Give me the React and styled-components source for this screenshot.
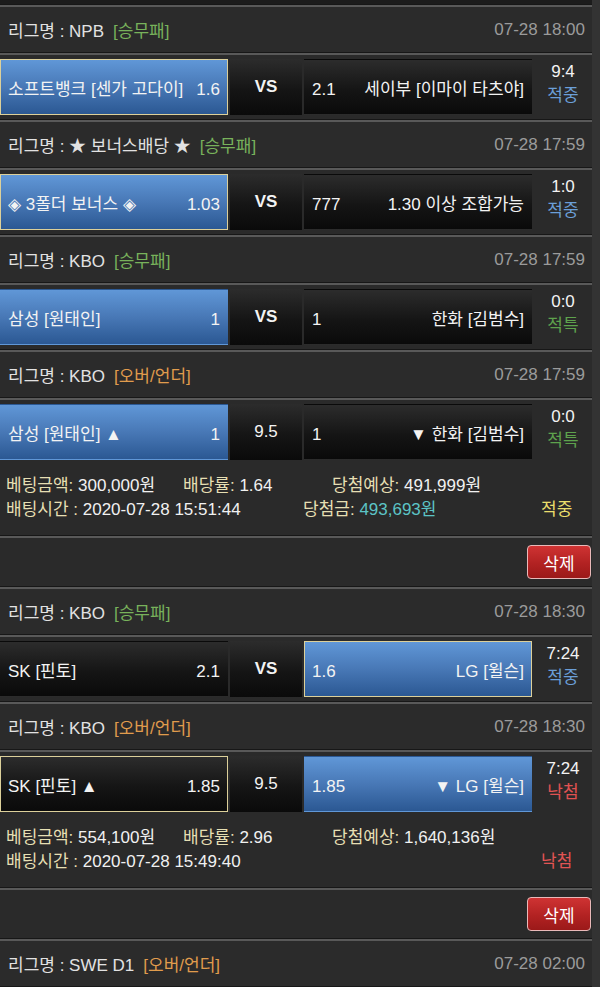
import React from "react";
import styled, { createGlobalStyle } from "styled-components";

const GlobalStyle = createGlobalStyle`
  html, body {
    margin: 0;
    padding: 0;
    background: #333333;
  }
  body {
    font-family: "Liberation Sans", "Noto Sans CJK KR", sans-serif;
    -webkit-font-smoothing: antialiased;
  }
  * {
    box-sizing: border-box;
  }
`;

const Page = styled.div`
  width: 592px;
  background: #2a2a2a;
`;

const TopEdge = styled.div`
  height: 4px;
  background: #1c1c1c;
`;

const Divider = styled.div`
  height: 3px;
  border-top: 1px solid #171717;
  background: #595959;
`;

const LeagueBar = styled.div`
  height: 45px;
  display: flex;
  align-items: center;
  justify-content: space-between;
  padding: 0 7px 0 8px;
  font-size: 17px;
  color: #e2e2e2;
  background: #2b2b2b;
`;

const TypeTag = styled.span`
  margin-left: 9px;
  color: ${(p) => (p.$kind === "승무패" ? "#78b25b" : "#e09c4d")};
`;

const MatchTime = styled.span`
  color: #9b9b9b;
`;

const MatchRow = styled.div`
  display: grid;
  grid-template-columns: 228px 72px 228px 1fr;
  column-gap: 2px;
  padding: 4px 0;
  background: #2a2a2a;
`;

const blueFill = "linear-gradient(to bottom, #6097d7 0%, #4878b6 50%, #2b5893 100%)";
const darkFill = "linear-gradient(to bottom, #2c2c2c 0%, #151515 55%, #0a0a0a 100%)";

const TeamCell = styled.div`
  height: 56px;
  display: flex;
  align-items: center;
  padding: 0 7px;
  font-size: 17px;
  color: #f3f3f3;
  white-space: nowrap;
  background: ${(p) => (p.$win ? blueFill : darkFill)};
  border: 1px solid ${(p) => (p.$picked ? "#dcd09a" : "transparent")};
`;

const CellText = styled.div`
  width: 100%;
  display: flex;
  justify-content: space-between;
  align-items: baseline;
`;

const MidCell = styled.div`
  height: 56px;
  display: flex;
  align-items: center;
  justify-content: center;
  font-size: 17px;
  font-weight: ${(p) => (p.$bold ? 700 : 400)};
  color: #f3f3f3;
  background: ${darkFill};
`;

const ResultCell = styled.div`
  height: 56px;
  display: flex;
  flex-direction: column;
  align-items: center;
  justify-content: center;
  padding-bottom: 6px;
  font-size: 17px;
  line-height: 24px;
  color: #f3f3f3;
`;

const resultColors = {
  적중: "#6b9fd8",
  적특: "#5ea24d",
  낙첨: "#e05252",
};

const ResultText = styled.span`
  color: ${(p) => resultColors[p.$status] || "#f3f3f3"};
`;

const Summary = styled.div`
  padding: 10px 6px 13px;
  font-size: 17px;
  background: #2a2a2a;
`;

const SummaryLine = styled.div`
  display: flex;
  align-items: baseline;
  height: 24px;
  line-height: 24px;
  white-space: nowrap;
`;

const SummaryItem = styled.span`
  flex: none;
  width: ${(p) => (p.$w ? `${p.$w}px` : "auto")};
`;

const Label = styled.span`
  color: #e6dfb3;
`;

const Value = styled.span`
  color: ${(p) => (p.$teal ? "#5cc4c6" : "#f1f1f1")};
`;

const BetStatus = styled.span`
  color: ${(p) => (p.$status === "적중" ? "#ebdf6c" : "#e25454")};
`;

const DeleteBar = styled.div`
  height: 48px;
  display: flex;
  justify-content: flex-end;
  align-items: flex-start;
  padding: 7px 1px 0 0;
  background: #2a2a2a;
`;

const DeleteButton = styled.button`
  width: 64px;
  height: 34px;
  border: 1px solid #e9b9b9;
  border-radius: 4px;
  background: linear-gradient(to bottom, #cf3333 0%, #b22222 55%, #9b1919 100%);
  color: #ffffff;
  font-family: inherit;
  font-size: 17px;
  padding: 0;
  cursor: pointer;
`;

const bets = [
  {
    games: [
      {
        league: "NPB",
        kind: "승무패",
        time: "07-28 18:00",
        home: "소프트뱅크 [센가 고다이]",
        homeOdd: "1.6",
        mid: "VS",
        awayOdd: "2.1",
        away: "세이부 [이마이 타츠야]",
        score: "9:4",
        result: "적중",
        win: "home",
        pick: "home",
      },
      {
        league: "★ 보너스배당 ★",
        kind: "승무패",
        time: "07-28 17:59",
        home: "◈ 3폴더 보너스 ◈",
        homeOdd: "1.03",
        mid: "VS",
        awayOdd: "777",
        away: "1.30 이상 조합가능",
        score: "1:0",
        result: "적중",
        win: "home",
        pick: "home",
      },
      {
        league: "KBO",
        kind: "승무패",
        time: "07-28 17:59",
        home: "삼성 [원태인]",
        homeOdd: "1",
        mid: "VS",
        awayOdd: "1",
        away: "한화 [김범수]",
        score: "0:0",
        result: "적특",
        win: "home",
      },
      {
        league: "KBO",
        kind: "오버/언더",
        time: "07-28 17:59",
        home: "삼성 [원태인] ▲",
        homeOdd: "1",
        mid: "9.5",
        awayOdd: "1",
        away: "▼ 한화 [김범수]",
        score: "0:0",
        result: "적특",
        win: "home",
      },
    ],
    amount: "300,000원",
    odds: "1.64",
    expected: "491,999원",
    betTime: "2020-07-28 15:51:44",
    payout: "493,693원",
    status: "적중",
  },
  {
    games: [
      {
        league: "KBO",
        kind: "승무패",
        time: "07-28 18:30",
        home: "SK [핀토]",
        homeOdd: "2.1",
        mid: "VS",
        awayOdd: "1.6",
        away: "LG [윌슨]",
        score: "7:24",
        result: "적중",
        win: "away",
        pick: "away",
      },
      {
        league: "KBO",
        kind: "오버/언더",
        time: "07-28 18:30",
        home: "SK [핀토] ▲",
        homeOdd: "1.85",
        mid: "9.5",
        awayOdd: "1.85",
        away: "▼ LG [윌슨]",
        score: "7:24",
        result: "낙첨",
        win: "away",
        pick: "home",
      },
    ],
    amount: "554,100원",
    odds: "2.96",
    expected: "1,640,136원",
    betTime: "2020-07-28 15:49:40",
    status: "낙첨",
  },
];

const nextLeague = { league: "SWE D1", kind: "오버/언더", time: "07-28 02:00" };

const LeagueHeader = ({ game }) => (
  <>
    <Divider />
    <LeagueBar>
      <span>
        리그명 : {game.league}
        <TypeTag $kind={game.kind}>[{game.kind}]</TypeTag>
      </span>
      <MatchTime>{game.time}</MatchTime>
    </LeagueBar>
  </>
);

const GameBlock = ({ game }) => (
  <>
    <LeagueHeader game={game} />
    <Divider />
    <MatchRow>
      <TeamCell $win={game.win === "home"} $picked={game.pick === "home"}>
        <CellText>
          <span>{game.home}</span>
          <span>{game.homeOdd}</span>
        </CellText>
      </TeamCell>
      <MidCell $bold={game.mid === "VS"}>{game.mid}</MidCell>
      <TeamCell $win={game.win === "away"} $picked={game.pick === "away"}>
        <CellText>
          <span>{game.awayOdd}</span>
          <span>{game.away}</span>
        </CellText>
      </TeamCell>
      <ResultCell>
        <span>{game.score}</span>
        <ResultText $status={game.result}>{game.result}</ResultText>
      </ResultCell>
    </MatchRow>
  </>
);

const BetSlip = ({ bet }) => (
  <>
    {bet.games.map((game, i) => (
      <GameBlock key={i} game={game} />
    ))}
    <Summary>
      <SummaryLine>
        <SummaryItem $w={177}>
          <Label>베팅금액: </Label>
          <Value>{bet.amount}</Value>
        </SummaryItem>
        <SummaryItem $w={149}>
          <Label>배당률: </Label>
          <Value>{bet.odds}</Value>
        </SummaryItem>
        <SummaryItem>
          <Label>당첨예상: </Label>
          <Value>{bet.expected}</Value>
        </SummaryItem>
      </SummaryLine>
      <SummaryLine>
        <SummaryItem $w={297}>
          <Label>배팅시간 : </Label>
          <Value>{bet.betTime}</Value>
        </SummaryItem>
        <SummaryItem $w={238}>
          {bet.payout && (
            <>
              <Label>당첨금: </Label>
              <Value $teal>{bet.payout}</Value>
            </>
          )}
        </SummaryItem>
        <SummaryItem>
          <BetStatus $status={bet.status}>{bet.status}</BetStatus>
        </SummaryItem>
      </SummaryLine>
    </Summary>
    <Divider />
    <DeleteBar>
      <DeleteButton>삭제</DeleteButton>
    </DeleteBar>
  </>
);

const App = () => {
  return (
    <Page>
      <GlobalStyle />
      <TopEdge />
      {bets.map((bet, i) => (
        <BetSlip key={i} bet={bet} />
      ))}
      <LeagueHeader game={nextLeague} />
      <Divider />
    </Page>
  );
};

export default App;
